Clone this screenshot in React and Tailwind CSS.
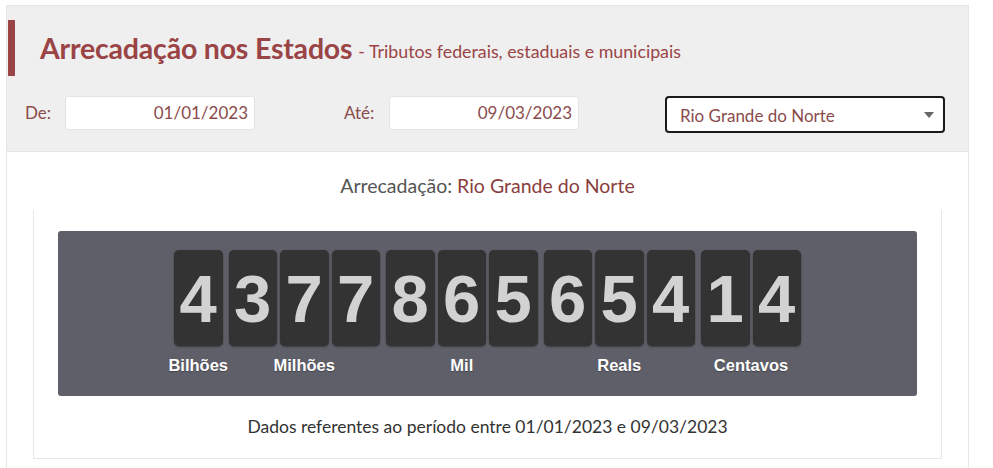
import React from 'react';

const groups = [
  { label: 'Bilhões', digits: ['4'] },
  { label: 'Milhões', digits: ['3', '7', '7'] },
  { label: 'Mil', digits: ['8', '6', '5'] },
  { label: 'Reals', digits: ['6', '5', '4'] },
  { label: 'Centavos', digits: ['1', '4'] },
];

function DateField({ label, value, labelWidth }) {
  return (
    <div className="flex items-center">
      <span className={`text-[17px] text-[#8a4b4b] ${labelWidth}`}>{label}</span>
      <div className="w-[190px] h-[34px] bg-white rounded-[3px] border border-[#e4e4e4] flex items-center justify-end pr-[6px] text-[17px] text-[#8a4b4b]">
        {value}
      </div>
    </div>
  );
}

function Tile({ d }) {
  return (
    <div className="w-[48.5px] h-[96px] bg-[#333333] rounded-[5px] shadow-[0_1px_2px_rgba(0,0,0,0.4)] flex items-center justify-center">
      <span className="text-[#d2d2d2] font-bold text-[67px] leading-none" style={{ fontFamily: '"Liberation Sans", Arial, sans-serif' }}>
        {d}
      </span>
    </div>
  );
}

export default function App() {
  return (
    <div className="w-[993px] h-[468px] bg-white pt-[5px] pl-[6px]" style={{ fontFamily: 'Lato, "Open Sans", sans-serif' }}>
      <div className="w-[963px] h-[463px] border-x border-t border-[#e6e6e6]">
        {/* header */}
        <div className="h-[146px] bg-[#efefef] border-b border-[#e4e4e4] pt-[14px]">
          <div className="flex items-center h-[56px] ml-[1px]">
            <div className="w-[7px] h-[56px] bg-[#9a4446]" />
            <h1 className="ml-[25px] text-[28.5px] font-bold text-[#9a4446] tracking-[-0.2px]">Arrecadação nos Estados</h1>
            <span className="ml-[6px] mt-[6px] text-[17.8px] text-[#9a4446]">- Tributos federais, estaduais e municipais</span>
          </div>
          <div className="flex items-center mt-[17px] pl-[18px]">
            <DateField label="De:" value="01/01/2023" labelWidth="w-[40px]" />
            <div className="ml-[89px]">
              <DateField label="Até:" value="09/03/2023" labelWidth="w-[45px]" />
            </div>
            <div className="ml-[86px] mt-[3px] w-[280px] h-[37px] bg-white border-2 border-[#1a1a1a] rounded-[4px] flex items-center justify-between pl-[13px] pr-[9px]">
              <span className="text-[17px] text-[#8a4b4b] mt-[2px]">Rio Grande do Norte</span>
              <svg width="10" height="6" viewBox="0 0 10 6">
                <path d="M0 0h10L5 6z" fill="#666" />
              </svg>
            </div>
          </div>
        </div>

        {/* content */}
        <div className="pt-[20px]">
          <p className="text-center text-[19.5px] leading-[28px] text-[#555]">
            Arrecadação: <span className="text-[#8a3e3e]">Rio Grande do Norte</span>
          </p>
          <div className="mx-[26px] mt-[10px] border-x border-b border-[#e6e6e6] h-[249px] px-[24px] pt-[21px]">
            <div className="h-[165px] bg-[#5f5f69] rounded-[3px] pt-[19px] flex justify-center gap-[6px]">
              {groups.map((g) => (
                <div key={g.label} className="flex flex-col items-center">
                  <div className="flex gap-[3px]">
                    {g.digits.map((d, i) => (
                      <Tile key={i} d={d} />
                    ))}
                  </div>
                  <div className="w-0 flex justify-center mt-[7px]">
                    <span
                      className="whitespace-nowrap text-white font-bold text-[16.5px] [text-shadow:0_1px_1px_rgba(0,0,0,0.3)]"
                      style={{ fontFamily: '"Liberation Sans", Arial, sans-serif' }}
                    >
                      {g.label}
                    </span>
                  </div>
                </div>
              ))}
            </div>
            <p className="text-center text-[17.5px] leading-[24px] text-[#333] mt-[19px]">
              Dados referentes ao período entre 01/01/2023 e 09/03/2023
            </p>
          </div>
        </div>
      </div>
    </div>
  );
}
